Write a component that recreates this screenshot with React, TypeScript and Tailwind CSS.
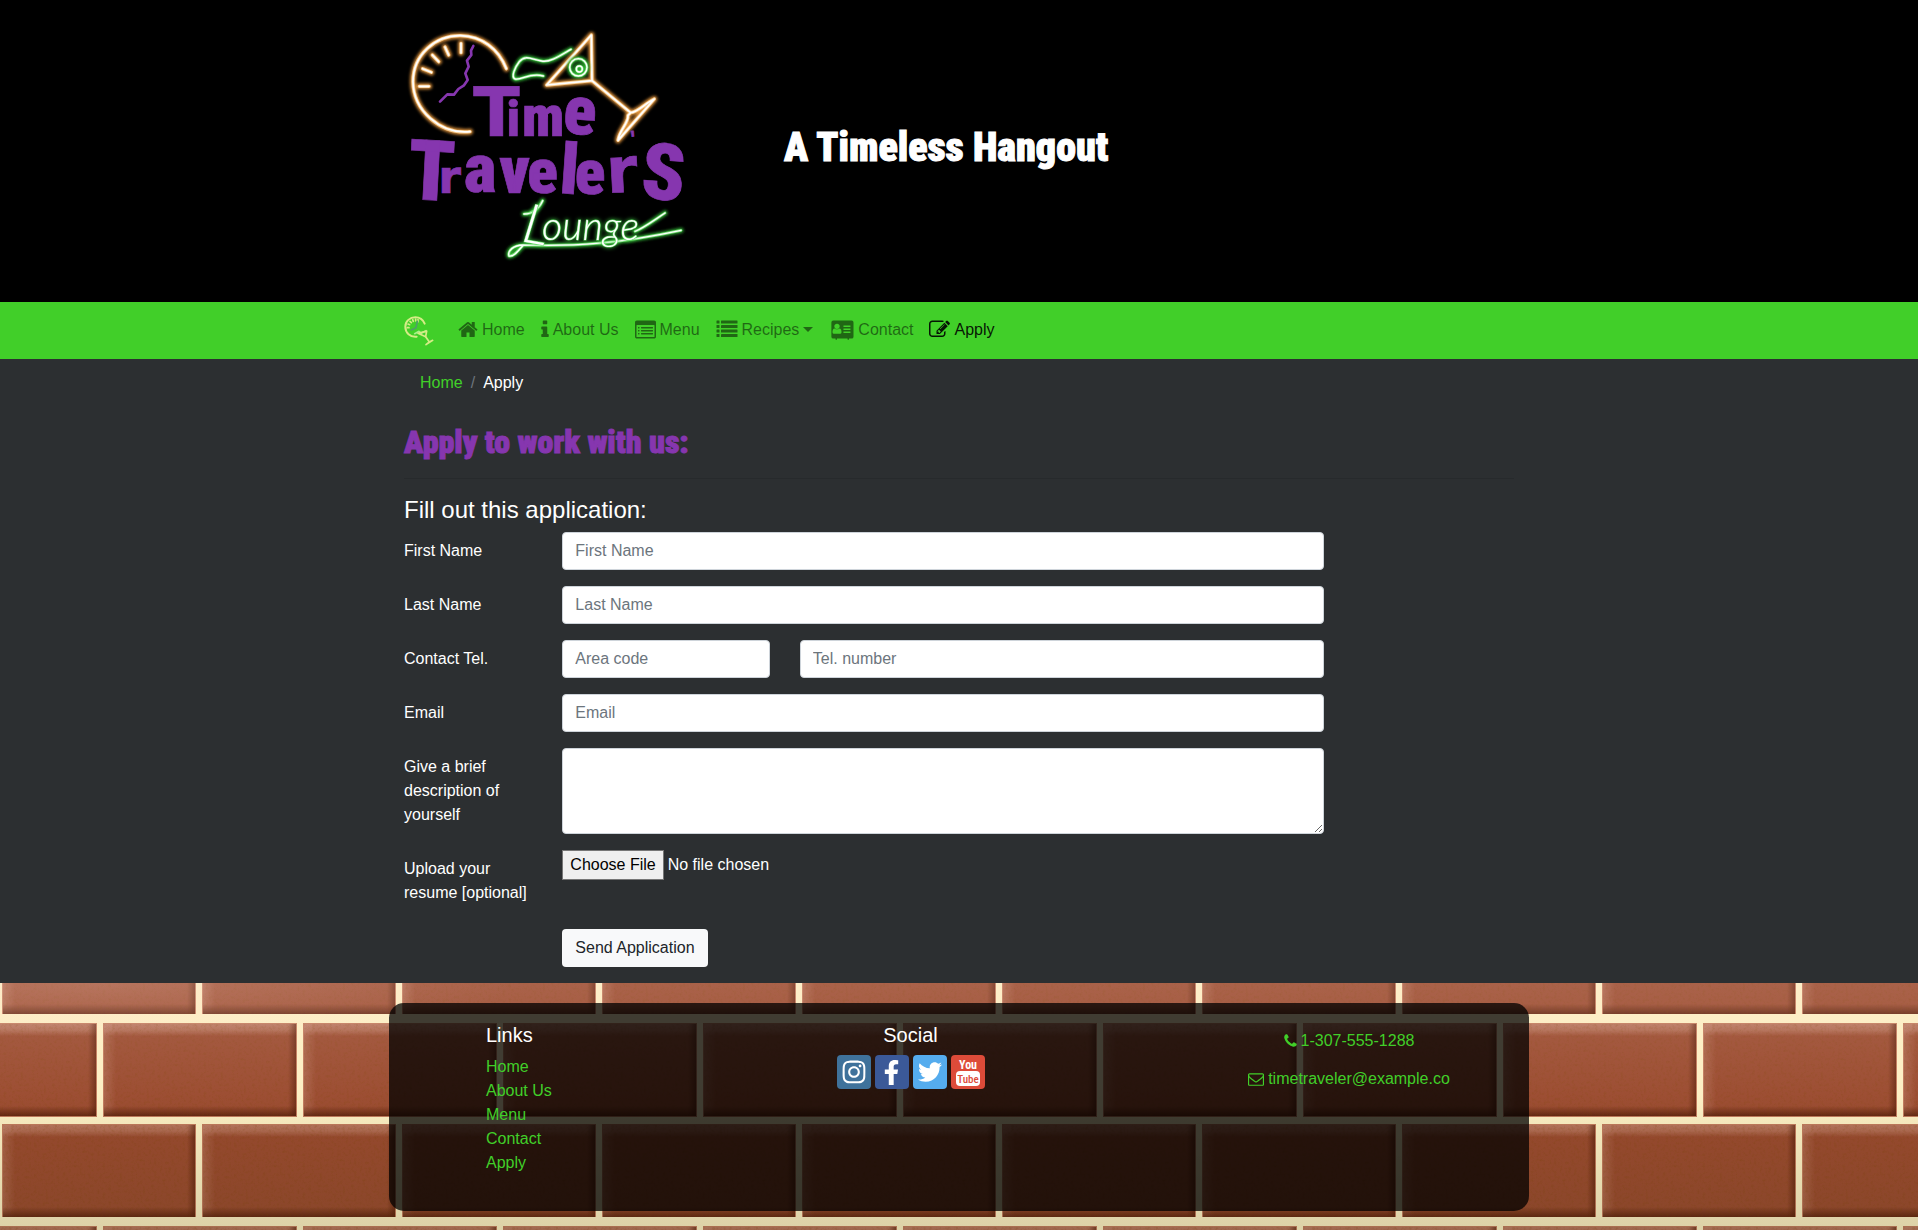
import type { ReactNode } from "react";
import { FaFacebookF, FaInstagram, FaTwitter } from "react-icons/fa";

type Glyph = { c: string; x: number; y: number; size: number; wide?: boolean; turn?: number };

const timeLetters: Glyph[] = [
  { c: "T", x: 250, y: 378, size: 204, wide: true },
  { c: "i", x: 350, y: 378, size: 150 },
  { c: "m", x: 396, y: 377, size: 172 },
  { c: "e", x: 517, y: 369, size: 204, turn: 4 },
];

const travelersLetters: Glyph[] = [
  { c: "T", x: 50, y: 566, size: 252, turn: 3 },
  { c: "r", x: 145, y: 548, size: 138, wide: true },
  { c: "a", x: 222, y: 547, size: 208 },
  { c: "v", x: 328, y: 549, size: 200 },
  { c: "e", x: 412, y: 549, size: 190 },
  { c: "l", x: 506, y: 549, size: 210, turn: 4 },
  { c: "e", x: 554, y: 553, size: 190 },
  { c: "r", x: 652, y: 549, size: 190, wide: true, turn: -3 },
  { c: "'", x: 728, y: 408, size: 60, turn: -8 },
  { c: "S", x: 750, y: 564, size: 236, turn: 4 },
];

function Word({ letters }: { letters: Glyph[] }) {
  return (
    <text className="fill-[#8636af] stroke-[#8636af] font-black" strokeWidth="2">
      {letters.map((g, i) => (
        <tspan
          key={i}
          x={g.x}
          y={g.y}
          rotate={g.turn ?? 0}
          fontSize={g.size}
          fontFamily={g.wide ? "DejaVu Sans, sans-serif" : "Roboto Condensed, sans-serif"}
        >
          {g.c}
        </tspan>
      ))}
    </text>
  );
}

function ClockAndGlass() {
  return (
    <>
      <path d="M240 365C150 374 70 300 69 215C69 135 135 76 212 77C275 79 325 115 349 176" />
      <path d="M213 100V128M165 111L176 135M127 135L146 155M98 176L124 187M88 229H117" />
      <path d="M604 75L470 225L606 212Z" />
      <path d="M606 212L722 308M722 308C745 306 765 280 793 267L684 391C688 360 716 340 714 316L722 308" />
    </>
  );
}

function GreenTubes() {
  return (
    <>
      <path d="M543 118C510 137 480 158 455 153C425 148 405 133 388 155C375 172 362 200 375 207C395 212 420 186 460 198" />
      <circle cx="565" cy="172" r="26" />
      <circle cx="568" cy="177" r="9" />
      <path d="M402 612C425 612 445 600 458 572" />
      <path d="M400 705C370 706 352 722 357 738C372 740 385 722 400 705C560 710 690 700 873 661" />
      <path d="M735 664C760 655 790 632 825 609" />
    </>
  );
}

function Logo() {
  return (
    <svg viewBox="42 0 888 810" className="h-[270px] w-[296px]" role="img" aria-label="Time Travelers Lounge">
      <defs>
        <filter id="glow" x="-10%" y="-10%" width="120%" height="120%">
          <feGaussianBlur stdDeviation="5" />
        </filter>
      </defs>
      <g fill="none" strokeLinecap="round" strokeLinejoin="round">
        <g stroke="#d98f3a" strokeWidth="18" filter="url(#glow)"><ClockAndGlass /></g>
        <g stroke="#f8cd92" strokeWidth="10"><ClockAndGlass /></g>
        <g stroke="#ffffff" strokeWidth="5"><ClockAndGlass /></g>
        <g stroke="#2fae33" strokeWidth="15" filter="url(#glow)"><GreenTubes /></g>
        <g stroke="#7ce07c" strokeWidth="8"><GreenTubes /></g>
        <g stroke="#ffffff" strokeWidth="4"><GreenTubes /></g>
      </g>
      <text
        className="fill-white stroke-[#5fd862] font-light italic drop-shadow-[0_0_6px_#3fd043]"
        strokeWidth="3"
        paintOrder="stroke"
        fontFamily="Lato, sans-serif"
      >
        <tspan x="392" y="694" fontSize="164" rotate="10">L</tspan>
        <tspan x="456" y="690" fontSize="118">ounge</tspan>
      </text>
      <path
        d="M250 108L243 122L244 135L231 152L236 170L226 190L233 210L222 226L205 237L192 254L172 253L150 275"
        fill="none"
        stroke="#8636af"
        strokeWidth="8"
        strokeLinejoin="round"
        strokeLinecap="round"
      />
      <Word letters={timeLetters} />
      <Word letters={travelersLetters} />
    </svg>
  );
}

function BrandMark() {
  return (
    <svg viewBox="0 0 90 90" className="size-[30px]" fill="none" stroke="#d5ec86" strokeLinecap="round" strokeLinejoin="round" aria-hidden="true">
      <path d="M38 62C18 64 4 50 4 32C4 15 18 4 34 4C48 4 57 11 62 23" strokeWidth="6" />
      <path d="M10 35H15M12 24L17 26M18 16L22 20M26 11L28 16M35 9V15M42 11V17" strokeWidth="5" />
      <path d="M40 16L36 35L22 42" stroke="#4f9d6a" strokeWidth="5" />
      <path d="M32 53L45 46L52 52L66 44" stroke="#a8f08d" strokeWidth="5" />
      <path d="M42 52L68 45L65 62Z" strokeWidth="5" />
      <path d="M65 62L76 78M66 86L86 73L76 78Z" strokeWidth="5" />
    </svg>
  );
}

function Icon({ box, className, children }: { box: string; className: string; children: ReactNode }) {
  return (
    <svg viewBox={box} fill="currentColor" className={className} aria-hidden="true">
      {children}
    </svg>
  );
}

const homeIcon = (
  <Icon box="64 0 1664 1792" className="h-[21px] w-5">
    <path d="M1472 992v480q0 26-19 45t-45 19h-384v-384h-256v384h-384q-26 0-45-19t-19-45v-480q0-1 .5-3t.5-3l575-474 575 474q1 2 1 6zm223-69l-62 74q-8 9-21 11h-3q-13 0-21-7l-692-577-692 577q-12 8-24 7-13-2-21-11l-62-74q-8-10-7-23.5t11-21.5l719-599q32-26 76-26t76 26l244 204v-195q0-14 9-23t23-9h192q14 0 23 9t9 23v408l219 182q10 8 11 21.5t-7 23.5z" />
  </Icon>
);

const infoIcon = (
  <Icon box="576 0 640 1792" className="h-[21px] w-2">
    <path d="M1216 1344v128q0 26-19 45t-45 19h-512q-26 0-45-19t-19-45v-128q0-26 19-45t45-19h64v-384h-64q-26 0-45-19t-19-45v-128q0-26 19-45t45-19h384q26 0 45 19t19 45v576h64q26 0 45 19t19 45zm-128-1152v192q0 26-19 45t-45 19h-256q-26 0-45-19t-19-45v-192q0-26 19-45t45-19h256q26 0 45 19t19 45z" />
  </Icon>
);

const menuIcon = (
  <Icon box="0 0 1792 1792" className="size-[21px]">
    <path
      fillRule="evenodd"
      d="M160 128h1472q66 0 113 47t47 113v1216q0 66-47 113t-113 47h-1472q-66 0-113-47t-47-113v-1216q0-66 47-113t113-47zM160 512q-32 0-32 32v960q0 32 32 32h1472q32 0 32-32v-960q0-32-32-32z"
    />
    <rect x="256" y="672" width="128" height="128" rx="32" />
    <rect x="256" y="928" width="128" height="128" rx="32" />
    <rect x="256" y="1184" width="128" height="128" rx="32" />
    <rect x="512" y="672" width="1024" height="128" rx="32" />
    <rect x="512" y="928" width="1024" height="128" rx="32" />
    <rect x="512" y="1184" width="1024" height="128" rx="32" />
  </Icon>
);

const listIcon = (
  <Icon box="0 0 1792 1792" className="h-[21px] w-[22px]">
    <rect x="0" y="128" width="256" height="256" rx="32" />
    <rect x="0" y="512" width="256" height="256" rx="32" />
    <rect x="0" y="896" width="256" height="256" rx="32" />
    <rect x="0" y="1280" width="256" height="256" rx="32" />
    <rect x="384" y="128" width="1408" height="256" rx="32" />
    <rect x="384" y="512" width="1408" height="256" rx="32" />
    <rect x="384" y="896" width="1408" height="256" rx="32" />
    <rect x="384" y="1280" width="1408" height="256" rx="32" />
  </Icon>
);

const cardIcon = (
  <Icon box="0 0 2048 1792" className="h-[21px] w-[25px]">
    <path
      fillRule="evenodd"
      d="M160 128h1728q160 0 160 160v1216q0 160-160 160h-224v64q0 32-32 32h-64q-32 0-32-32v-64h-896v64q0 32-32 32h-64q-32 0-32-32v-64h-192q-160 0-160-160v-1216q0-160 160-160zM1024 1131q0-64-9-117t-30-103-60-78-96-28q-83 80-189 80t-189-80q-54 0-96 28t-60 78-30 103-9 117q0 120 90 120h588q90 0 90-120zM870 625q0-94-67-161t-163-67-163 67-67 161 67 162 163 67 163-67 67-162zM1184 576v64q0 32 32 32h544q32 0 32-32v-64q0-32-32-32h-544q-32 0-32 32zM1184 832v64q0 32 32 32h544q32 0 32-32v-64q0-32-32-32h-544q-32 0-32 32zM1184 1088v64q0 32 32 32h544q32 0 32-32v-64q0-32-32-32h-544q-32 0-32 32z"
    />
  </Icon>
);

const editIcon = (
  <Icon box="0 0 1792 1792" className="size-[21px]">
    <path d="M888 1184l116-116-152-152-116 116v56h96v96h56zm440-720q-16-16-33 1l-350 350q-17 17-1 33t33-1l350-350q17-17 1-33zm80 594v190q0 119-84.5 203.5t-203.5 84.5h-832q-119 0-203.5-84.5t-84.5-203.5v-832q0-119 84.5-203.5t203.5-84.5h832q63 0 117 25 15 7 18 23 3 17-9 29l-49 49q-14 14-32 8-23-6-45-6h-832q-66 0-113 47t-47 113v832q0 66 47 113t113 47h832q66 0 113-47t47-113v-126q0-13 9-22l64-64q15-15 35-7t20 29zm-96-738l288 288-672 672h-288v-288zm444 132l-92 92-288-288 92-92q28-28 68-28t68 28l152 152q28 28 28 68t-28 68z" />
  </Icon>
);

const phoneIcon = (
  <Icon box="192 0 1408 1792" className="h-4 w-[13px]">
    <path d="M1600 1240q0 27-10 70.5t-21 68.5q-21 50-122 106-94 51-186 51-27 0-53-3.5t-57.5-12.5-47-14.5-55.5-20.5-49-18q-98-35-175-83-127-79-264-216t-216-264q-48-77-83-175-3-9-18-49t-20.5-55.5-14.5-47-12.5-57.5-3.5-53q0-92 51-186 56-101 106-122 25-11 68.5-21t70.5-10q14 0 21 3 18 6 53 76 11 19 30 54t35 63.5 31 53.5q3 4 17.5 25t21.5 35.5 7 28.5q0 20-28.5 50t-62 55-62 53-28.5 46q0 9 5 22.5t8.5 20.5 14 24 11.5 19q76 137 174 235t235 174q2 1 19 11.5t24 14 20.5 8.5 22.5 5q18 0 46-28.5t53-62 55-62 50-28.5q14 0 28.5 7t35.5 21.5 25 17.5q25 15 53.5 31t63.5 35 54 30q70 35 76 53 3 7 3 21z" />
  </Icon>
);

const mailIcon = (
  <Icon box="0 0 1792 1792" className="size-4">
    <path d="M1664 1504v-768q-32 36-69 66-268 206-426 338-51 43-83 67t-86.5 48.5-102.5 24.5h-2q-48 0-102.5-24.5t-86.5-48.5-83-67q-158-132-426-338-37-30-69-66v768q0 13 9.5 22.5t22.5 9.5h1472q13 0 22.5-9.5t9.5-22.5zm0-1051v-24.5l-.5-13-3-12.5-5.5-9-9-7.5-14-2.5h-1472q-13 0-22.5 9.5t-9.5 22.5q0 168 147 284 193 152 401 317 6 5 35 29.5t46 37.5 44.5 31.5 50.5 27.5 43 9h2q20 0 43-9t50.5-27.5 44.5-31.5 46-37.5 35-29.5q208-165 401-317 54-43 100.5-115.5t46.5-131.5zm128-37v1088q0 66-47 113t-113 47h-1472q-66 0-113-47t-47-113v-1088q0-66 47-113t113-47h1472q66 0 113 47t47 113z" />
  </Icon>
);

const navItems = [
  { label: "Home", icon: homeIcon },
  { label: "About Us", icon: infoIcon },
  { label: "Menu", icon: menuIcon },
  { label: "Recipes", icon: listIcon, menu: true },
  { label: "Contact", icon: cardIcon },
  { label: "Apply", icon: editIcon, active: true },
];

function Brick({ x, y }: { x: number; y: number }) {
  return (
    <g transform={`translate(${x} ${y})`}>
      <rect x="-1" y="-1" width="194" height="94" fill="#c07a5c" />
      <rect width="192" height="92" fill="#9a4a2f" />
      <rect width="192" height="12" fill="url(#brickTop)" />
      <rect width="12" height="92" fill="url(#brickLeft)" />
      <rect x="184" width="8" height="92" fill="url(#brickRight)" />
      <rect y="82" width="192" height="10" fill="url(#brickBottom)" />
      <rect width="192" height="92" filter="url(#grain)" opacity="0.3" />
    </g>
  );
}

function BrickWall() {
  return (
    <svg className="absolute inset-0 h-full w-full" aria-hidden="true">
      <defs>
        <linearGradient id="brickTop" x2="0" y2="1">
          <stop offset="0" stopColor="#d09a86" stopOpacity="0.55" />
          <stop offset="0.5" stopColor="#d09a86" stopOpacity="0.4" />
          <stop offset="1" stopColor="#d09a86" stopOpacity="0" />
        </linearGradient>
        <linearGradient id="brickLeft">
          <stop offset="0" stopColor="#d09a86" stopOpacity="0.3" />
          <stop offset="1" stopColor="#d09a86" stopOpacity="0" />
        </linearGradient>
        <linearGradient id="brickRight">
          <stop offset="0" stopColor="#511a08" stopOpacity="0" />
          <stop offset="1" stopColor="#511a08" stopOpacity="0.6" />
        </linearGradient>
        <linearGradient id="brickBottom" x2="0" y2="1">
          <stop offset="0" stopColor="#511a08" stopOpacity="0" />
          <stop offset="1" stopColor="#511a08" stopOpacity="0.75" />
        </linearGradient>
        <linearGradient id="wallLight" x2="0" y2="1">
          <stop offset="0" stopColor="#ffe0d8" stopOpacity="0.16" />
          <stop offset="0.45" stopColor="#ffe0d8" stopOpacity="0.03" />
          <stop offset="0.55" stopColor="#303010" stopOpacity="0.04" />
          <stop offset="1" stopColor="#303010" stopOpacity="0.16" />
        </linearGradient>
        <radialGradient id="cornerLight" cx="0.05" cy="0" r="0.22">
          <stop offset="0" stopColor="#ffd8cc" stopOpacity="0.16" />
          <stop offset="1" stopColor="#ffd8cc" stopOpacity="0" />
        </radialGradient>
        <filter id="grain" x="0" y="0" width="100%" height="100%">
          <feTurbulence type="fractalNoise" baseFrequency="0.35" numOctaves="3" seed="4" />
          <feColorMatrix values="0 0 0 0 0.2  0 0 0 0 0.05  0 0 0 0 0  1.6 0 0 0 -0.7" />
        </filter>
        <pattern id="bricks" y="31" width="200" height="203" patternUnits="userSpaceOnUse">
          <rect width="200" height="203" fill="#fdf0c4" />
          <Brick x={-96} y={10} />
          <Brick x={104} y={10} />
          <Brick x={3} y={111} />
        </pattern>
      </defs>
      <rect width="100%" height="100%" fill="url(#bricks)" />
      <rect width="100%" height="100%" fill="url(#wallLight)" />
      <rect width="100%" height="100%" fill="url(#cornerLight)" />
    </svg>
  );
}

const control =
  "block w-full rounded-sm border border-[#ced4da] bg-white px-3 text-base leading-6 text-[#495057] placeholder:text-[#6c757d]";
const labelClass = "col-span-2 pt-[7px]";

function TextRow({ id, label, type = "text" }: { id: string; label: string; type?: string }) {
  return (
    <div className="grid grid-cols-12 gap-x-[30px]">
      <label htmlFor={id} className={labelClass}>{label}</label>
      <div className="col-span-10">
        <input id={id} type={type} placeholder={label} className={`${control} h-[38px]`} />
      </div>
    </div>
  );
}

function YouTubeMark() {
  return (
    <svg viewBox="0 0 34 34" className="size-full" aria-hidden="true">
      <text x="17" y="14" textAnchor="middle" fontSize="12" className="fill-white font-['Roboto_Condensed'] font-bold">You</text>
      <rect x="5" y="16" width="24" height="15" rx="4" fill="#fff" />
      <text x="17" y="28" textAnchor="middle" fontSize="11" className="fill-[#dd4b39] font-['Roboto_Condensed'] font-medium">Tube</text>
    </svg>
  );
}

const socials = [
  { name: "Instagram", tone: "bg-[#3f729b]", mark: <FaInstagram className="size-[26px]" /> },
  { name: "Facebook", tone: "bg-[#3b5998]", mark: <FaFacebookF className="size-[25px]" /> },
  { name: "Twitter", tone: "bg-[#55acee]", mark: <FaTwitter className="size-6" /> },
  { name: "YouTube", tone: "bg-[#dd4b39]", mark: <YouTubeMark /> },
];

const display = "font-['Impact','Roboto_Condensed',sans-serif] font-black";

export default function App() {
  return (
    <div className="flex min-h-screen flex-col bg-[#2c2f31] font-['Liberation_Sans',Arial,sans-serif] text-base leading-6 text-white">
      <header className="bg-black">
        <div className="mx-auto grid max-w-[1140px] grid-cols-3 items-center px-[15px] pt-[10px] pb-[22px]">
          <Logo />
          <h1 className={`${display} col-span-2 pt-1.5 pl-[10px] text-[40px] leading-12 [-webkit-text-stroke:1px_#fff]`}>A Timeless Hangout</h1>
        </div>
      </header>

      <nav className="bg-[#41cf29]" aria-label="Main">
        <div className="mx-auto flex h-[57px] max-w-[1140px] items-center px-[15px]">
          <a href="#home" aria-label="Time Travelers Lounge" className="mr-4"><BrandMark /></a>
          <ul className="flex items-center">
            {navItems.map((item) => (
              <li key={item.label}>
                <a
                  href={`#${item.label}`}
                  className={`flex items-center gap-1 px-2 pt-1.5 pb-2 ${item.active ? "text-black/90" : "text-black/50"}`}
                >
                  {item.icon}
                  <span>{item.label}</span>
                  {item.menu && <span className="border-x-[5px] border-t-[5px] border-x-transparent border-t-current" />}
                </a>
              </li>
            ))}
          </ul>
        </div>
      </nav>

      <main className="mx-auto w-full max-w-[1140px] px-[15px] pb-4">
        <ol className="mb-4 flex gap-2 px-4 py-3" aria-label="Breadcrumb">
          <li><a href="#home" className="text-[#41cf29]">Home</a></li>
          <li className="text-[#6c757d]" aria-hidden="true">/</li>
          <li>Apply</li>
        </ol>
        <h2 className={`${display} text-[32px] leading-[39px] text-[#8636af] [-webkit-text-stroke:1px_#8636af]`}>Apply to work with us:</h2>
        <hr className="my-4 border-black/10" />
        <h4 className="mb-2 text-2xl leading-[29px]">Fill out this application:</h4>

        <form className="flex max-w-[920px] flex-col gap-4">
          <TextRow id="firstname" label="First Name" />
          <TextRow id="lastname" label="Last Name" />
          <div className="grid grid-cols-12 gap-x-[30px]">
            <label htmlFor="telnum" className={labelClass}>Contact Tel.</label>
            <div className="col-span-3">
              <input type="tel" aria-label="Area code" placeholder="Area code" className={`${control} h-[38px]`} />
            </div>
            <div className="col-span-7">
              <input id="telnum" type="tel" placeholder="Tel. number" className={`${control} h-[38px]`} />
            </div>
          </div>
          <TextRow id="email" label="Email" type="email" />
          <div className="grid grid-cols-12 gap-x-[30px]">
            <label htmlFor="about" className={labelClass}>Give a brief description of yourself</label>
            <div className="col-span-10">
              <textarea id="about" rows={3} className={`${control} h-[86px] py-1.5`} />
            </div>
          </div>
          <div className="grid grid-cols-12 gap-x-[30px] pb-2">
            <label htmlFor="resume" className={labelClass}>Upload your resume [optional]</label>
            <div className="col-span-10">
              <input
                id="resume"
                type="file"
                className="block w-full file:border file:border-[#767676] file:bg-[#efefef] file:px-[7px] file:py-0.5 file:text-black"
              />
            </div>
          </div>
          <div className="grid grid-cols-12 gap-x-[30px]">
            <div className="col-span-10 col-start-3">
              <button type="submit" className="h-[38px] rounded-sm bg-[#f8f9fa] px-[13px] text-[#212529]">Send Application</button>
            </div>
          </div>
        </form>
      </main>

      <footer className="relative grow py-5">
        <BrickWall />
        <div className="relative mx-auto grid max-w-[1140px] grid-cols-12 rounded-[15px] bg-black/75 pt-5 pb-9">
          <div className="col-span-3 col-start-2 pl-0.5">
            <h5 className="mb-2 text-xl leading-6">Links</h5>
            <ul className="text-[#41cf29]">
              {["Home", "About Us", "Menu", "Contact", "Apply"].map((link) => (
                <li key={link}><a href={`#${link}`}>{link}</a></li>
              ))}
            </ul>
          </div>
          <div className="col-span-3 pr-0.5 text-center">
            <h5 className="mb-2 text-xl leading-6">Social</h5>
            <div className="flex justify-center gap-1">
              {socials.map((s) => (
                <a
                  key={s.name}
                  href={`#${s.name}`}
                  aria-label={s.name}
                  className={`flex size-[34px] items-center justify-center rounded-sm text-white ${s.tone}`}
                >
                  {s.mark}
                </a>
              ))}
            </div>
          </div>
          <div className="col-span-4 col-start-9 flex flex-col items-center gap-[14px] pt-1.5 pl-5 text-[#41cf29]">
            <a href="tel:13075551288" className="flex items-center gap-1">{phoneIcon}1-307-555-1288</a>
            <a href="mailto:timetraveler@example.co" className="flex items-center gap-1">{mailIcon}timetraveler@example.co</a>
          </div>
        </div>
      </footer>
    </div>
  );
}
